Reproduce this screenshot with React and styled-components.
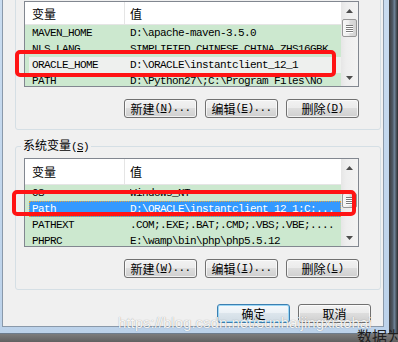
import React from 'react';
import styled, { createGlobalStyle } from 'styled-components';

const Global = createGlobalStyle`
  html, body { margin: 0; padding: 0; }
  body { width: 398px; height: 342px; overflow: hidden; background: #3a3a3a; }
`;

const CJK = `"Noto Sans CJK SC", "Noto Sans", sans-serif`;
const MONO = `"Liberation Mono", "Noto Sans CJK SC", monospace`;

const Screen = styled.div`
  position: relative;
  width: 398px;
  height: 342px;
  overflow: hidden;
  display: flex;
  flex-direction: column;
  background: #3a3a3a;
  font-family: ${CJK};
`;

const TopArea = styled.div`
  display: flex;
  height: 334px;
`;

const Frame = styled.div`
  width: 389px;
  box-sizing: border-box;
  padding: 0 5px 7px 2px;
  background: linear-gradient(180deg, #c9dcf0 0%, #bcd2ea 100%);
  border-bottom: 1px solid #6d7c8c;
`;

const Side = styled.div`
  flex: 1;
  background: linear-gradient(90deg, #3c3c3c 0, #505a66 40%, #6f8296 60%, #2c2c2c 100%);
`;

const BottomStrip = styled.div`
  flex: 1;
  display: flex;
  justify-content: flex-end;
  background: linear-gradient(180deg, #7c7c7c 0, #5d5d5d 100%);
`;

const Behind = styled.div`
  margin-top: -6px;
  margin-right: -4px;
  font-size: 15px;
  line-height: 15px;
  color: #1e1e1e;
  white-space: nowrap;
`;

const Dialog = styled.div`
  box-sizing: border-box;
  width: 382px;
  height: 327px;
  background: #f0f0f0;
  border: 1px solid #8a99aa;
  border-top: none;
  display: flex;
  flex-direction: column;
`;

const Group = styled.fieldset`
  margin: ${p => p.$mt}px 2px 0 12px;
  padding: 4px 21px 11px 8px;
  border: 1px solid #d5dfe5;
  border-radius: 3px;
  min-width: 0;
`;

const Legend = styled.legend`
  margin-left: -3px;
  padding: 0 2px;
  font-size: 12px;
  line-height: 14px;
  color: #000;
`;

const Mn = styled.span`
  font-family: ${MONO};
  font-size: 11px;
  letter-spacing: -0.6px;
`;

const List = styled.div`
  height: ${p => p.$h}px;
  border: 1px solid #828790;
  background: #cce8cf;
  display: grid;
  grid-template-columns: 1fr 17px;
  overflow: hidden;
`;

const Pane = styled.div`
  overflow: hidden;
  min-width: 0;
`;

const Header = styled.div`
  height: ${p => p.$h}px;
  display: grid;
  grid-template-columns: 100px 1fr;
  background: #fff;
  border-bottom: 1px solid #e5e5e5;
`;

const HeadCell = styled.div`
  display: flex;
  align-items: center;
  padding-left: ${p => (p.$first ? 7 : 5)}px;
  border-right: ${p => (p.$first ? '1px solid #e5e5e5' : 'none')};
  font-size: 12px;
  color: #000;
`;

const Row = styled.div`
  box-sizing: border-box;
  height: 16px;
  margin-left: 4px;
  padding-left: 3px;
  display: grid;
  grid-template-columns: 98px 1fr;
  align-items: center;
  font-family: ${MONO};
  font-size: 11px;
  letter-spacing: -0.6px;
  white-space: nowrap;
  color: ${p => (p.$sel === 'focus' ? '#fff' : '#000')};
  background: ${p =>
    p.$sel === 'focus' ? '#3399ff' : p.$sel === 'dim' ? '#eef0ee' : 'transparent'};
  outline: ${p => (p.$sel === 'focus' ? '1px dotted #e0a040' : 'none')};
  outline-offset: -1px;
`;

const Cell = styled.span`
  overflow: hidden;
`;

const Scroll = styled.div`
  display: flex;
  flex-direction: column;
  background: linear-gradient(90deg, #e6e6e6 0, #eeeeee 30%, #f3f3f3 100%);
`;

const ArrowBtn = styled.div`
  height: 17px;
  flex: none;
  display: flex;
  align-items: center;
  justify-content: center;
`;

const Track = styled.div`
  flex: 1;
`;

const Thumb = styled.div`
  box-sizing: border-box;
  margin: ${p => p.$top}px 0 0 1px;
  width: 15px;
  height: ${p => p.$h}px;
  border: 1px solid #979797;
  border-radius: 2px;
  background: linear-gradient(90deg, #f7f7f7 0, #ececec 45%, #dcdcdc 55%, #d2d2d2 100%);
  display: flex;
  flex-direction: column;
  align-items: center;
  justify-content: center;
  gap: 1px;
`;

const Grip = styled.div`
  width: 7px;
  height: 1px;
  background: #7a7a7a;
  box-shadow: 0 1px 0 #fff;
`;

const ButtonRow = styled.div`
  display: flex;
  justify-content: flex-end;
  gap: 8px;
  margin: ${p => p.$mt || 12}px ${p => p.$mr || 0}px 0 0;
`;

const Button = styled.div`
  box-sizing: border-box;
  width: 73px;
  height: 19px;
  border: 1px solid ${p => (p.$def ? '#3c7fb1' : '#707070')};
  border-radius: 3px;
  background: ${p =>
    p.$def
      ? 'linear-gradient(180deg, #f6f9fc 0%, #eaf0f5 49%, #dce5ec 50%, #d0dbe4 100%)'
      : 'linear-gradient(180deg, #f2f2f2 0%, #ebebeb 49%, #dddddd 50%, #cfcfcf 100%)'};
  box-shadow: ${p =>
    p.$def ? 'inset 0 0 0 1px #9ad6f5' : 'inset 0 0 0 1px rgba(255,255,255,0.7)'};
  display: flex;
  align-items: center;
  justify-content: center;
  font-size: 12px;
  line-height: 1;
  color: #000;
  white-space: nowrap;
`;

const RedBox = styled.div`
  position: absolute;
  box-sizing: border-box;
  left: ${p => p.$x}px;
  top: ${p => p.$y}px;
  width: ${p => p.$w}px;
  height: ${p => p.$h}px;
  border: 4px solid #ff1414;
  border-radius: 5px;
`;

const Watermark = styled.div`
  position: absolute;
  left: 118px;
  top: 314px;
  font-family: "Liberation Sans", Arial, sans-serif;
  font-size: 15px;
  line-height: 17px;
  color: rgba(255, 255, 255, 0.92);
  text-shadow: 0 0 1px rgba(0, 0, 0, 0.4);
  white-space: nowrap;
`;

const Up = () => (
  <svg width="7" height="4" viewBox="0 0 7 4"><path d="M3.5 0 L7 4 L0 4 Z" fill="#4d4d4d" /></svg>
);
const Down = () => (
  <svg width="7" height="4" viewBox="0 0 7 4"><path d="M0 0 L7 0 L3.5 4 Z" fill="#4d4d4d" /></svg>
);

const ScrollBar = ({ top, h }) => (
  <Scroll>
    <ArrowBtn><Up /></ArrowBtn>
    <Track>
      <Thumb $top={top} $h={h}>
        <Grip /><Grip /><Grip /><Grip />
      </Thumb>
    </Track>
    <ArrowBtn><Down /></ArrowBtn>
  </Scroll>
);

const Label = ({ cn, k, dots }) => (
  <>
    {cn}
    <Mn>
      (<u>{k}</u>){dots ? '...' : ''}
    </Mn>
  </>
);

const VarList = ({ h, headH, rows, top, thumb }) => (
  <List $h={h}>
    <Pane>
      <Header $h={headH}>
        <HeadCell $first>变量</HeadCell>
        <HeadCell>值</HeadCell>
      </Header>
      {rows.map(([n, v, sel]) => (
        <Row key={n} $sel={sel}>
          <Cell>{n}</Cell>
          <Cell>{v}</Cell>
        </Row>
      ))}
    </Pane>
    <ScrollBar top={top} h={thumb} />
  </List>
);

const userRows = [
  ['MAVEN_HOME', 'D:\\apache-maven-3.5.0'],
  ['NLS_LANG', 'SIMPLIFIED CHINESE_CHINA.ZHS16GBK'],
  ['ORACLE_HOME', 'D:\\ORACLE\\instantclient_12_1', 'dim'],
  ['PATH', 'D:\\Python27\\;C:\\Program Files\\No'],
];

const sysRows = [
  ['OS', 'Windows_NT'],
  ['Path', 'D:\\ORACLE\\instantclient_12_1;C:...', 'focus'],
  ['PATHEXT', '.COM;.EXE;.BAT;.CMD;.VBS;.VBE;....'],
  ['PHPRC', 'E:\\wamp\\bin\\php\\php5.5.12'],
];

export default function App() {
  return (
    <Screen>
      <Global />
      <TopArea>
        <Frame>
          <Dialog>
            <Group $mt={-19}>
              <Legend>用户变量<Mn>(<u>U</u>)</Mn></Legend>
              <VarList h={84} headH={22} rows={userRows} top={0} thumb={18} />
              <ButtonRow>
                <Button><Label cn="新建" k="N" dots /></Button>
                <Button><Label cn="编辑" k="E" dots /></Button>
                <Button><Label cn="删除" k="D" /></Button>
              </ButtonRow>
            </Group>
            <Group $mt={8}>
              <Legend>系统变量<Mn>(<u>S</u>)</Mn></Legend>
              <VarList h={87} headH={25} rows={sysRows} top={17} thumb={15} />
              <ButtonRow>
                <Button><Label cn="新建" k="W" dots /></Button>
                <Button><Label cn="编辑" k="I" dots /></Button>
                <Button><Label cn="删除" k="L" /></Button>
              </ButtonRow>
            </Group>
            <ButtonRow $mt={14} $mr={12}>
              <Button $def>确定</Button>
              <Button>取消</Button>
            </ButtonRow>
          </Dialog>
        </Frame>
        <Side />
      </TopArea>
      <BottomStrip>
        <Behind>数据为</Behind>
      </BottomStrip>
      <RedBox $x={15} $y={50} $w={321} $h={27} />
      <RedBox $x={12} $y={190} $w={344} $h={26} />
      <Watermark>https://blog.csdn.net/sunhaijingxiaohai</Watermark>
    </Screen>
  );
}
